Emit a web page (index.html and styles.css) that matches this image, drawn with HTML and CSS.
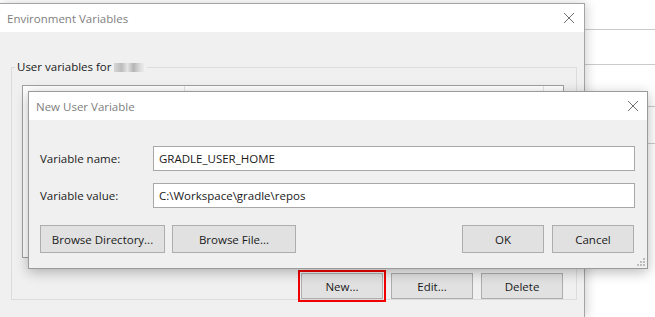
FILE: index.html
```html
<!DOCTYPE html>
<html lang="en">
<head>
  <meta charset="UTF-8">
  <meta name="viewport" content="width=device-width, initial-scale=1.0">
  <title>Environment Variables</title>
  <link rel="stylesheet" href="styles.css">
</head>
<body>

  <!-- Ventana de fondo (lista de la izquierda del panel de sistema) -->
  <div class="backdrop">
    <div class="bg-row row-a"></div>
    <div class="bg-row row-b"></div>
    <div class="bg-row row-c"></div>
    <div class="bg-row row-d"></div>
  </div>

  <!-- Environment Variables -->
  <section class="window env-window">
    <div class="title-bar">
      <span class="title">Environment Variables</span>
      <svg class="close-icon" width="12" height="12" viewBox="0 0 12 12"><path d="M1 1L11 11M11 1L1 11" stroke="#6f6f6f" stroke-width="1"/></svg>
    </div>
    <div class="window-body">
      <fieldset class="group">
        <legend>User variables for <span class="blur-name"></span></legend>
        <div class="var-table">
          <div class="var-head">
            <span class="col col-name"></span>
            <span class="col col-value"></span>
            <span class="col col-end"></span>
          </div>
        </div>
        <div class="btn-row">
          <button class="btn new-btn">New...</button>
          <button class="btn">Edit...</button>
          <button class="btn">Delete</button>
        </div>
      </fieldset>
    </div>
  </section>

  <!-- New User Variable -->
  <section class="window dialog">
    <div class="title-bar">
      <span class="title">New User Variable</span>
      <svg class="close-icon" width="12" height="12" viewBox="0 0 12 12"><path d="M1 1L11 11M11 1L1 11" stroke="#6f6f6f" stroke-width="1"/></svg>
    </div>
    <div class="dialog-body">
      <div class="form-grid">
        <label for="varName">Variable name:</label>
        <input type="text" id="varName" value="GRADLE_USER_HOME">
        <label for="varValue">Variable value:</label>
        <input type="text" id="varValue" value="C:\Workspace\gradle\repos">
      </div>
      <div class="dialog-buttons">
        <button class="btn btn-dir">Browse Directory...</button>
        <button class="btn btn-file">Browse File...</button>
        <span class="spacer"></span>
        <button class="btn btn-ok">OK</button>
        <button class="btn btn-cancel">Cancel</button>
      </div>
    </div>
    <svg class="grip" width="8" height="8" viewBox="0 0 8 8">
      <rect x="6" y="0" width="2" height="2" fill="#bdbdbd"/>
      <rect x="3" y="3" width="2" height="2" fill="#bdbdbd"/>
      <rect x="6" y="3" width="2" height="2" fill="#bdbdbd"/>
      <rect x="0" y="6" width="2" height="2" fill="#bdbdbd"/>
      <rect x="3" y="6" width="2" height="2" fill="#bdbdbd"/>
      <rect x="6" y="6" width="2" height="2" fill="#bdbdbd"/>
    </svg>
  </section>

</body>
</html>
```

FILE: styles.css
```css
/* Estilos globales */
body {
  margin: 0;
  width: 655px;
  height: 317px;
  overflow: hidden;
  position: relative;
  background-color: #fff;
  font-family: 'Open Sans', 'Noto Sans', sans-serif;
  font-size: 11.5px;
  color: #1a1a1a;
}

/* Fondo con filas */
.bg-row {
  border-bottom: 1px solid #cacaca;
}

.row-a { height: 29px; }
.row-b { height: 34px; }
.row-c { height: 41px; }
.row-d { height: 36px; }

/* Ventanas */
.window {
  position: absolute;
  box-sizing: border-box;
  background-color: #f0f0f0;
  border: 1px solid #a4a4a4;
}

.title-bar {
  height: 28px;
  background-color: #fff;
  display: flex;
  align-items: center;
  justify-content: space-between;
  padding: 0 8px 0 7px;
}

.title {
  color: #808080;
}

.env-window {
  left: -1px;
  top: 3px;
  width: 586px;
  height: 314px;
  border-bottom: none;
  box-shadow: 2px 0 10px rgba(0, 0, 0, 0.18);
}

.env-window .title-bar {
  padding-left: 7px;
  padding-right: 9px;
}

/* Grupo de variables */
.group {
  margin: 27px 7px 0 11px;
  padding: 10px 12px 0 10px;
  border: 1px solid #dcdcdc;
  min-width: 0;
}

.group legend {
  margin-left: -7px;
  padding: 0 3px 0 2px;
  line-height: 16px;
  color: #1a1a1a;
}

.blur-name {
  display: inline-block;
  width: 30px;
  height: 9px;
  vertical-align: -1px;
  background: linear-gradient(90deg, #d6d6d6, #bcbcbc 25%, #e4e4e4 45%, #b5b5b5 65%, #d9d9d9 85%, #ececec);
  filter: blur(0.7px);
}

.var-table {
  height: 173px;
  box-sizing: border-box;
  border: 1px solid #a0a0a0;
  background-color: #fff;
}

.var-head {
  display: flex;
  height: 24px;
}

.col {
  border-right: 1px solid #e5e5e5;
}

.col-name { width: 161px; }
.col-value { width: 358px; }
.col-end { flex: 1; border-right: none; }

.btn-row {
  display: flex;
  justify-content: flex-end;
  gap: 8px;
  margin-top: 15px;
  margin-right: 1px;
}

/* Botones */
.btn {
  font-family: inherit;
  font-size: 11.5px;
  color: #1a1a1a;
  background-color: #e1e1e1;
  border: 1px solid #adadad;
  height: 26px;
  width: 82px;
  padding: 0;
}

.new-btn {
  outline: 2px solid #f00000;
  outline-offset: 1px;
}

/* Diálogo nuevo */
.dialog {
  left: 28px;
  top: 91px;
  width: 620px;
  height: 178px;
  border-color: #9a9a9a;
  box-shadow: 0 3px 12px rgba(0, 0, 0, 0.28);
}

.dialog-body {
  padding: 26px 12px 0 11px;
}

.form-grid {
  display: grid;
  grid-template-columns: 113px 1fr;
  row-gap: 12px;
  align-items: center;
}

.form-grid input {
  height: 25px;
  box-sizing: border-box;
  border: 1px solid #a8a8a8;
  padding: 0 5px;
  font-family: inherit;
  font-size: 11.5px;
  color: #1a1a1a;
  outline: none;
}

.dialog-buttons {
  display: flex;
  gap: 7px;
  margin-top: 17px;
  padding-right: 1px;
}

.dialog-buttons .btn {
  height: 28px;
}

.btn-dir { width: 125px; }
.btn-file { width: 124px; }
.btn-ok { width: 82px; }
.btn-cancel { width: 82px; margin-left: 1px; }

.spacer {
  flex: 1;
}

.grip {
  position: absolute;
  right: 2px;
  bottom: 2px;
}
```
